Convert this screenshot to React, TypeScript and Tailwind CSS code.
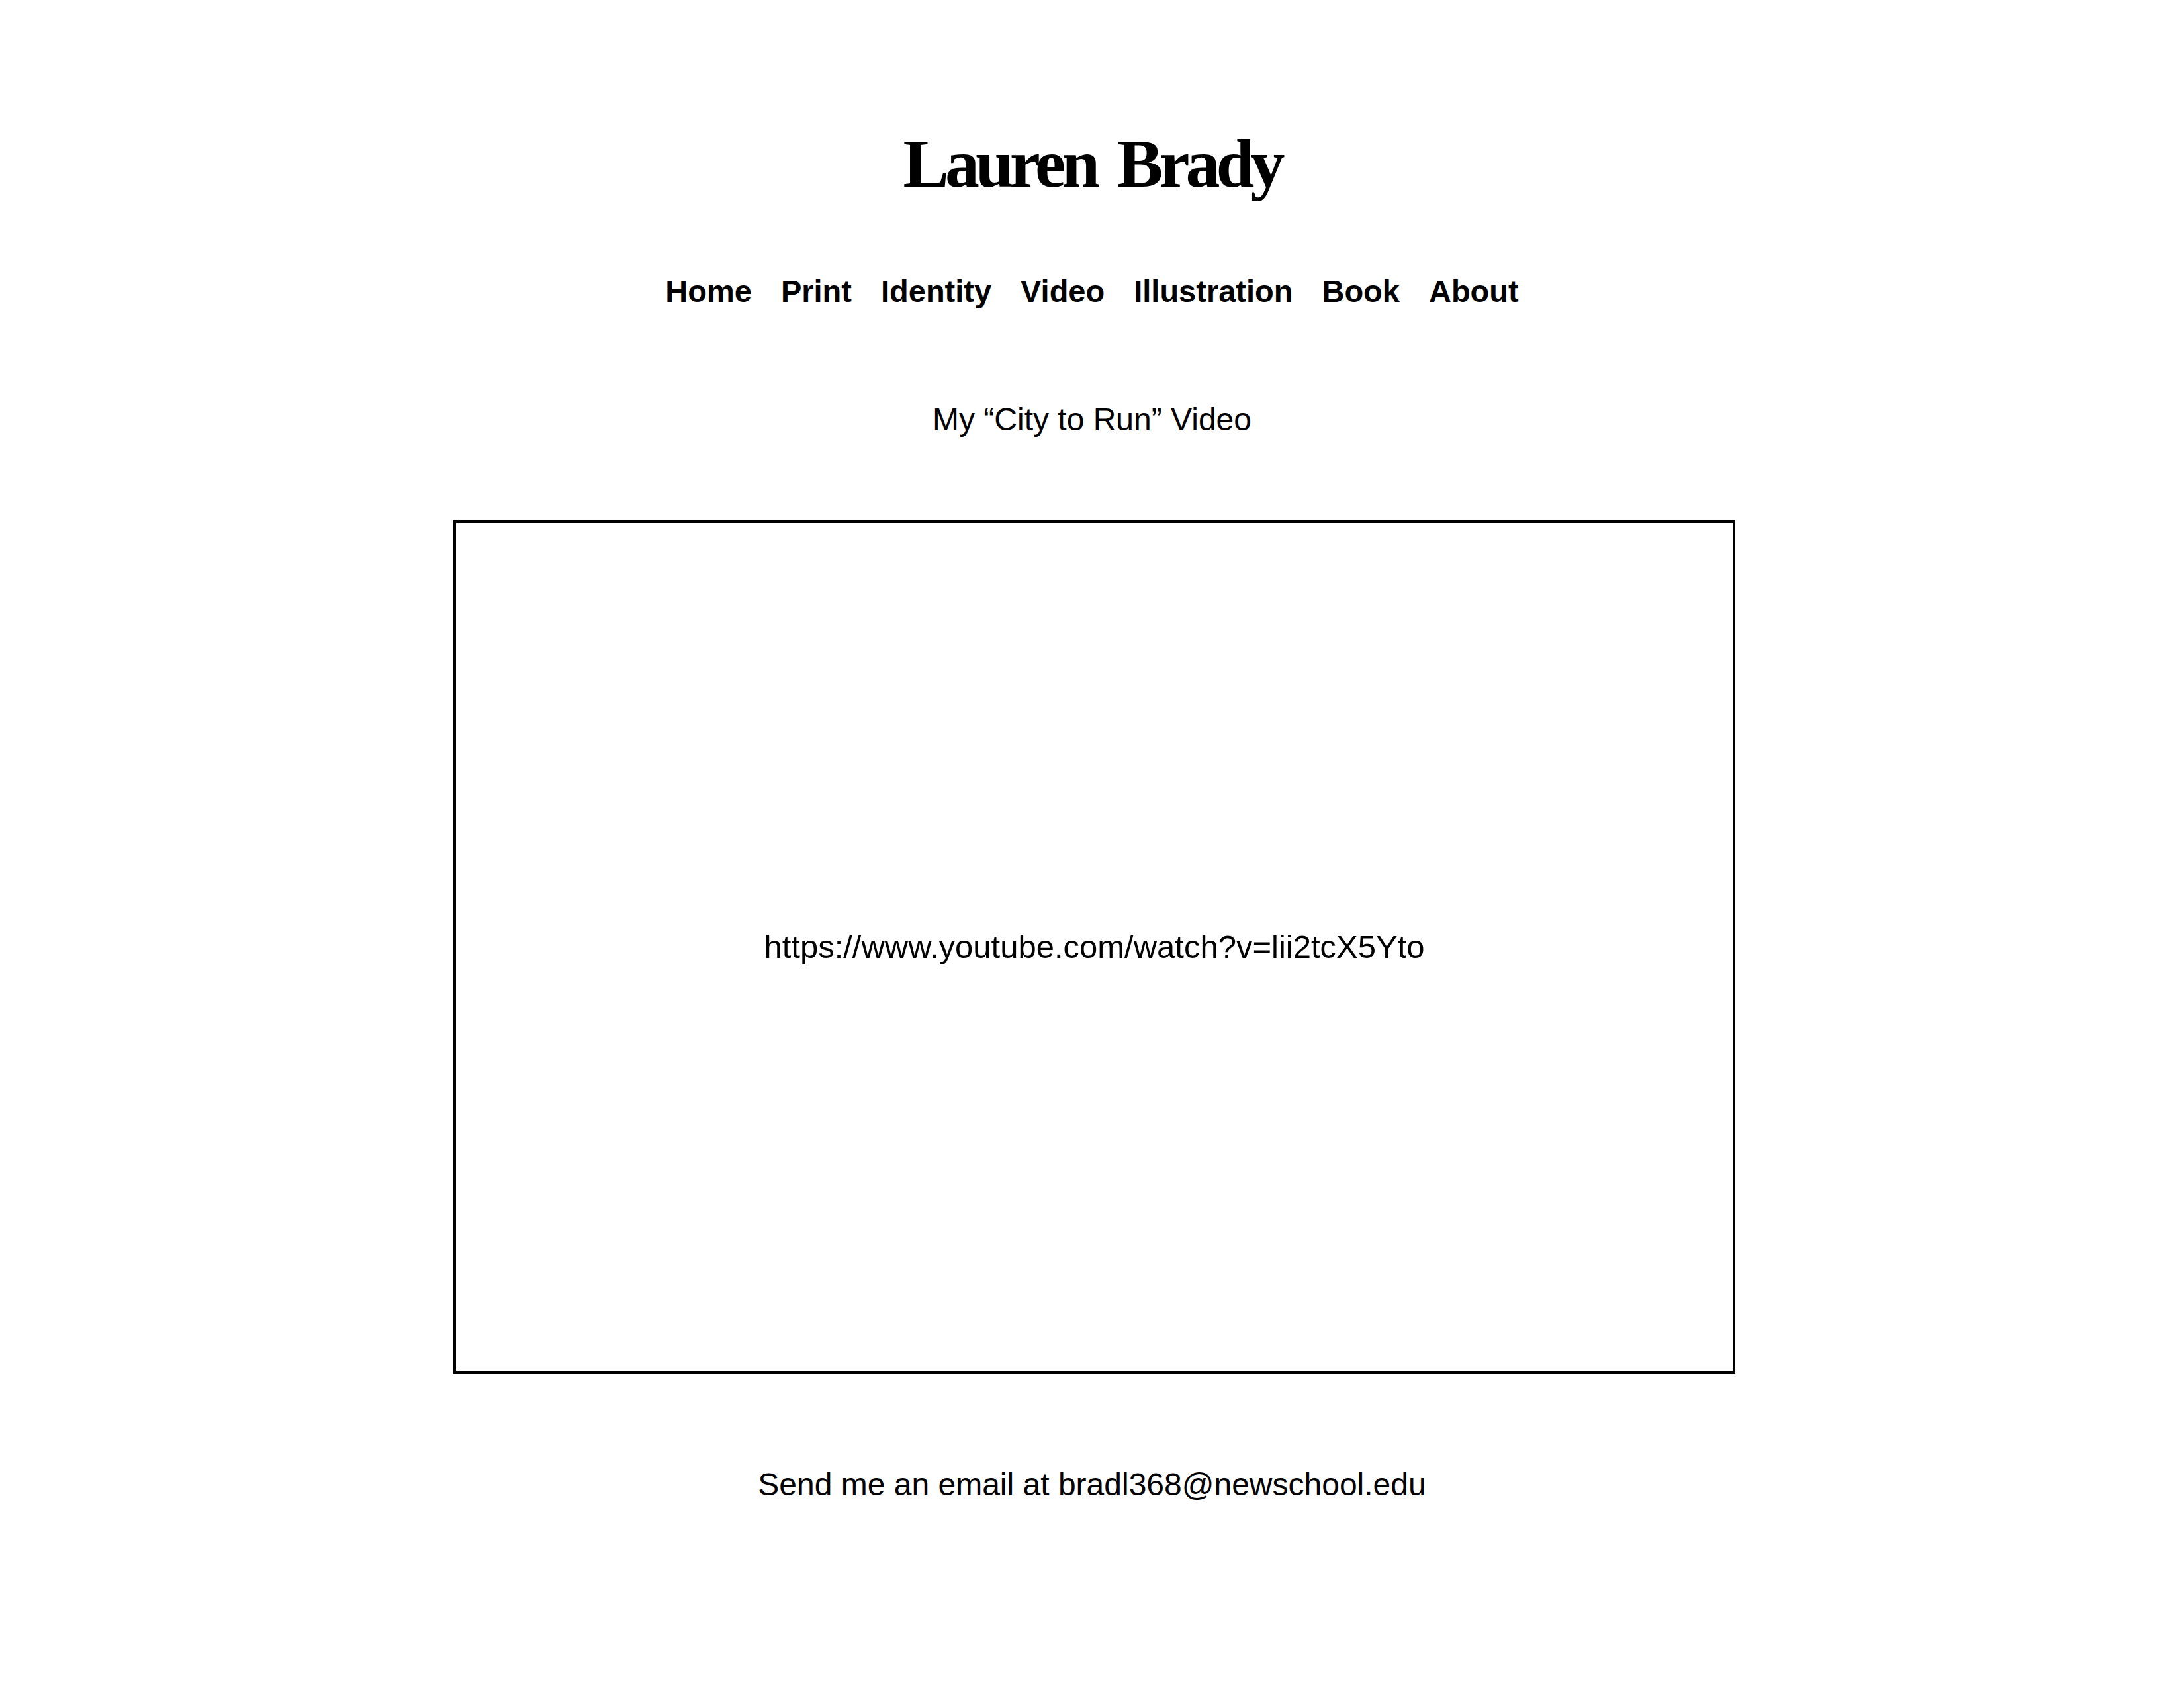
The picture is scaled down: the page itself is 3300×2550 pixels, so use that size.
import React from "react";

export default function App() {
  const navItems = ["Home", "Print", "Identity", "Video", "Illustration", "Book", "About"];
  return (
    <div className="min-h-[2550px] w-full bg-white text-black flex flex-col items-center font-['Liberation_Sans',Arial,sans-serif]">
      <h1 className="pt-[195px] text-[104px] leading-[104px] font-bold tracking-[-6px] [word-spacing:12px] text-black font-['Liberation_Serif','Times_New_Roman',serif]">
        Lauren Brady
      </h1>
      <nav className="mt-[117px] flex flex-row gap-[44px] text-[47px] leading-[47px] font-bold">
        {navItems.map((item) => (
          <a key={item} href="#" className="text-black no-underline">
            {item}
          </a>
        ))}
      </nav>
      <p className="mt-[147px] text-[48px] leading-[48px]">My “City to Run” Video</p>
      <div className="mt-[128px] ml-[7px] w-[1937px] h-[1289px] border-[4px] border-black flex items-center justify-center">
        <span className="text-[49px] leading-[49px]">https://www.youtube.com/watch?v=lii2tcX5Yto</span>
      </div>
      <p className="mt-[144px] text-[48px] leading-[48px]">Send me an email at bradl368@newschool.edu</p>
    </div>
  );
}
